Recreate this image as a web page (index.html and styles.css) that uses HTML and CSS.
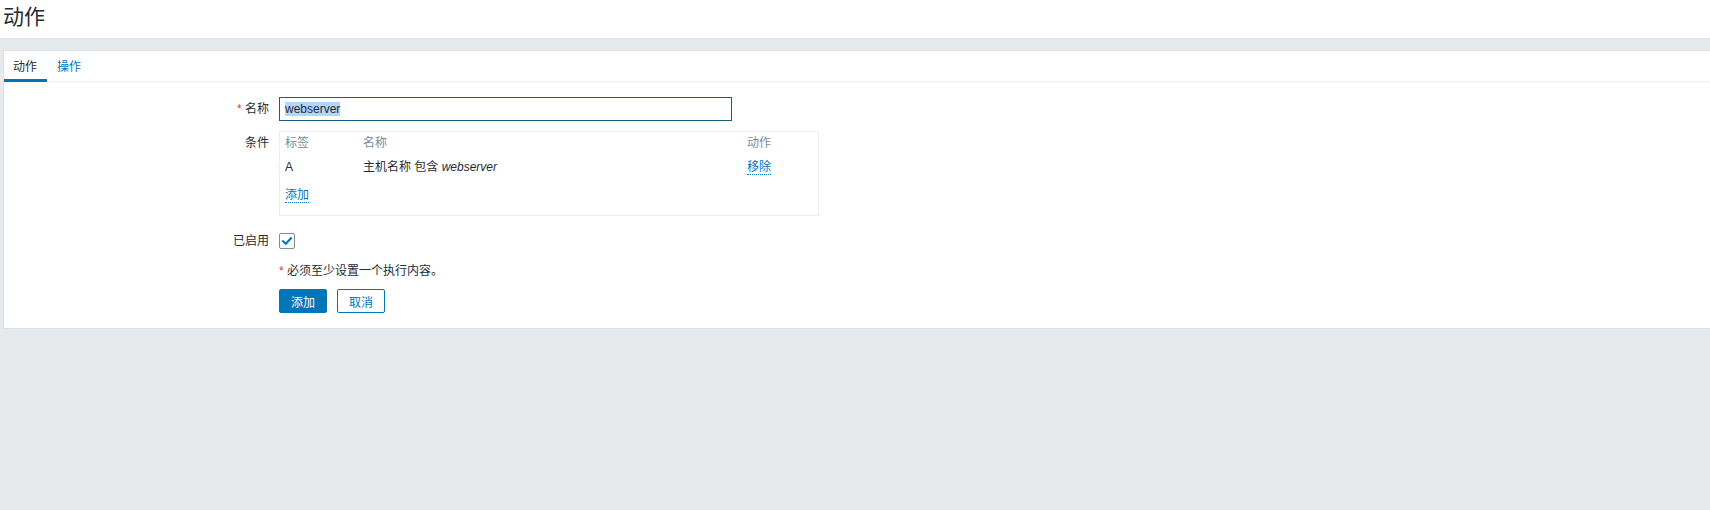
FILE: index.html
```html
<!DOCTYPE html>
<html lang="zh-CN">
<head>
<meta charset="utf-8">
<title>动作</title>
<link rel="stylesheet" href="styles.css">
</head>
<body>
<header class="page-header">
  <h1 class="page-title">动作</h1>
</header>
<main class="content">
  <section class="panel">
    <nav class="tabs">
      <a class="tab tab-active">动作</a>
      <a class="tab">操作</a>
    </nav>
    <div class="form">
      <div class="lbl lbl-input"><span class="req">*</span> 名称</div>
      <div class="field">
        <div class="text-input"><span class="selected">webserver</span></div>
      </div>

      <div class="lbl lbl-cond">条件</div>
      <div class="field">
        <div class="cond-box">
          <div class="cond-row cond-head">
            <span class="c1">标签</span><span class="c2">名称</span><span class="c3">动作</span>
          </div>
          <div class="cond-row cond-data">
            <span class="c1">A</span><span class="c2">主机名称 包含 <em>webserver</em></span><span class="c3"><span class="link">移除</span></span>
          </div>
          <div class="cond-add"><span class="link">添加</span></div>
        </div>
      </div>

      <div class="lbl lbl-check">已启用</div>
      <div class="field field-check">
        <span class="checkbox">
          <svg width="16" height="16" viewBox="0 0 16 16"><path d="M4 8.2 L6.8 10.8 L12 5.2" fill="none" stroke="#0275b8" stroke-width="2" stroke-linecap="square"/></svg>
        </span>
      </div>

      <div class="lbl lbl-empty"></div>
      <div class="field field-note"><span class="req">*</span> 必须至少设置一个执行内容。</div>

      <div class="lbl lbl-empty"></div>
      <div class="field field-buttons">
        <button class="btn btn-primary" type="button">添加</button>
        <button class="btn btn-alt" type="button">取消</button>
      </div>
    </div>
  </section>
</main>
</body>
</html>
```

FILE: styles.css
```css
* { box-sizing: border-box; }
html, body {
  margin: 0;
  padding: 0;
}
body {
  background: #e7eaed;
  font-family: "Liberation Sans", "Noto Sans CJK SC", Arial, sans-serif;
  font-size: 12px;
  color: #1f2c33;
  height: 510px;
  overflow: hidden;
}
.page-header {
  background: #ffffff;
  height: 39px;
  border-bottom: 1px solid #dde2e6;
  padding-left: 3px;
}
.page-title {
  margin: 0;
  font-weight: normal;
  font-size: 21px;
  line-height: 34px;
  color: #1f2c33;
}
.content {
  padding-top: 11px;
}
.panel {
  margin-left: 3px;
  margin-right: -2px;
  background: #ffffff;
  border: 1px solid #dde2e6;
  padding-bottom: 15px;
}
.tabs {
  display: flex;
  height: 31px;
  border-bottom: 1px solid #ebeef0;
}
.tab {
  display: block;
  height: 31px;
  line-height: 28px;
  padding: 2px 10px 0 9px;
  color: #0275b8;
  border-bottom: 3px solid transparent;
  cursor: pointer;
}
.tab + .tab {
  padding-left: 10px;
}
.tab-active {
  color: #1f2c33;
  border-bottom-color: #0275b8;
}
.form {
  display: grid;
  grid-template-columns: 265px 1fr;
  column-gap: 10px;
  row-gap: 10px;
  padding-top: 15px;
}
.lbl {
  text-align: right;
  white-space: nowrap;
}
.lbl-input { line-height: 24px; }
.lbl-cond { line-height: 24px; }
.lbl-check { line-height: 16px; margin-top: 7px; }
.req { color: #e33734; }
.text-input {
  width: 453px;
  height: 24px;
  border: 1px solid #1d5a80;
  padding: 0 5px;
  line-height: 22px;
}
.selected {
  background: #b4d5fd;
}
.cond-box {
  width: 540px;
  border: 1px solid #ebeef0;
  padding: 0 5px 11px 5px;
}
.cond-row {
  display: flex;
}
.cond-head {
  line-height: 23px;
  color: #768d99;
}
.cond-data {
  line-height: 24px;
}
.c1 { width: 78px; }
.c2 { width: 384px; }
.c3 { flex: 1; }
.cond-add {
  padding-top: 7px;
  line-height: 18px;
}
.link {
  color: #0275b8;
  border-bottom: 1px dotted #0275b8;
  cursor: pointer;
}
.field-check {
  margin-top: 7px;
  height: 16px;
}
.checkbox {
  display: block;
  width: 16px;
  height: 16px;
  border: 1px solid #7b8d99;
  border-radius: 2px;
}
.checkbox svg {
  display: block;
  margin: -1px;
}
.field-note {
  line-height: 20px;
  padding-top: 2px;
}
.field-buttons {
  display: flex;
  gap: 10px;
  margin-top: -2px;
}
.btn {
  height: 24px;
  padding: 0 11px;
  font-family: "Liberation Sans", "Noto Sans CJK SC", Arial, sans-serif;
  font-size: 12px;
  border-radius: 2px;
  border: 1px solid #0275b8;
  cursor: pointer;
  min-width: 48px;
}
.btn-primary {
  background: #0275b8;
  color: #ffffff;
}
.btn-alt {
  background: #ffffff;
  color: #0275b8;
}
```
